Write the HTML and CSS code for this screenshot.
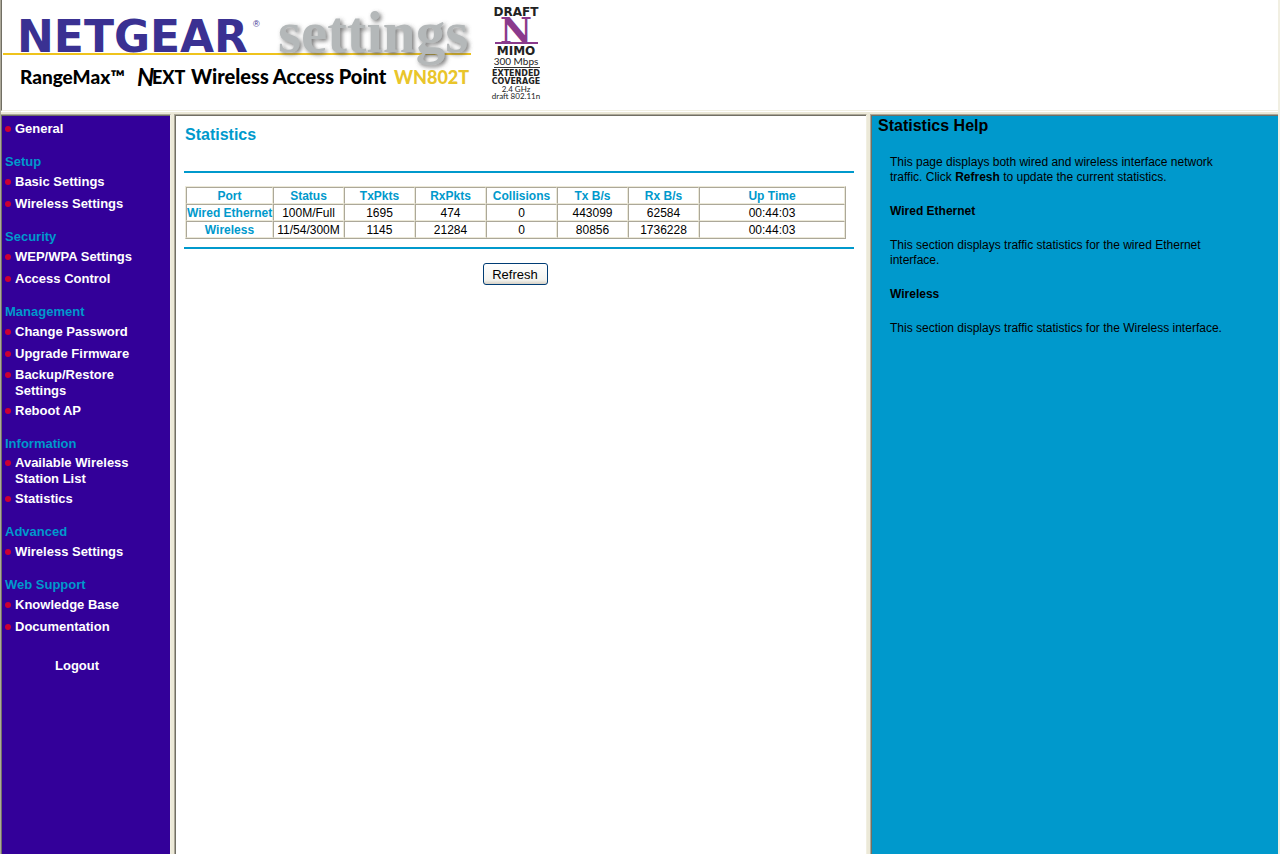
FILE: index.html
```
<!DOCTYPE html>
<html lang="en">
<head>
  <meta charset="UTF-8">
  <meta name="viewport" content="width=device-width, initial-scale=1.0">
  <title>NETGEAR WN802T</title>
  <link rel="stylesheet" href="styles.css">
</head>
<body>

<header class="banner">
  <svg class="logo" width="478" height="100" viewBox="0 0 478 100" role="img" aria-label="NETGEAR settings">
    <defs>
      <filter id="shadow" x="-10%" y="-10%" width="120%" height="130%">
        <feDropShadow dx="2" dy="2" stdDeviation="2" flood-color="#555" flood-opacity="0.8"/>
      </filter>
    </defs>
    <rect x="0" y="53" width="468" height="2" fill="#efc31c"/>
    <text class="brand" x="14" y="52">NETGEAR</text>
    <text class="reg" x="250" y="27">®</text>
    <text class="settings" x="275" y="52" filter="url(#shadow)">settings</text>
    <text class="model" x="17" y="84">RangeMax™</text>
    <text class="model next-n" x="134" y="86">N</text>
    <text class="model next-ext" x="149" y="84">EXT</text>
    <text class="model product" x="188" y="84">Wireless Access Point</text>
    <text class="model number" x="391" y="84">WN802T</text>
  </svg>
  <svg class="badge" width="60" height="104" viewBox="0 0 60 104" role="img" aria-label="Draft N MIMO">
    <text class="badge-bold" x="29" y="16">DRAFT</text>
    <text class="badge-n" x="29" y="43">N</text>
    <rect x="8" y="42" width="43" height="2" fill="#8a3a8c"/>
    <text class="badge-bold" x="29" y="55">MIMO</text>
    <text class="badge-text" x="29" y="65">300 Mbps</text>
    <rect x="7" y="67" width="46" height="1" fill="#333"/>
    <text class="badge-small" x="29" y="76">EXTENDED</text>
    <text class="badge-small" x="29" y="84">COVERAGE</text>
    <text class="badge-light" x="29" y="92">2.4 GHz</text>
    <text class="badge-light" x="29" y="99">draft 802.11n</text>
  </svg>
</header>

<div class="frames">
  <nav class="menu">
    <ul>
      <li><a href="#">General</a></li>
    </ul>
    <h2>Setup</h2>
    <ul>
      <li><a href="#">Basic Settings</a></li>
      <li><a href="#">Wireless Settings</a></li>
    </ul>
    <h2>Security</h2>
    <ul>
      <li><a href="#">WEP/WPA Settings</a></li>
      <li><a href="#">Access Control</a></li>
    </ul>
    <h2>Management</h2>
    <ul>
      <li><a href="#">Change Password</a></li>
      <li><a href="#">Upgrade Firmware</a></li>
      <li class="two-lines"><a href="#">Backup/Restore<br>Settings</a></li>
      <li><a href="#">Reboot AP</a></li>
    </ul>
    <h2>Information</h2>
    <ul>
      <li class="two-lines"><a href="#">Available Wireless<br>Station List</a></li>
      <li><a href="#">Statistics</a></li>
    </ul>
    <h2>Advanced</h2>
    <ul>
      <li><a href="#">Wireless Settings</a></li>
    </ul>
    <h2>Web Support</h2>
    <ul>
      <li><a href="#">Knowledge Base</a></li>
      <li><a href="#">Documentation</a></li>
    </ul>
    <a class="logout" href="#">Logout</a>
  </nav>

  <main class="content">
    <h1>Statistics</h1>
    <div class="stats">
      <table>
        <colgroup>
          <col class="col-port">
          <col span="6" class="col-num">
          <col>
        </colgroup>
        <tr>
          <th>Port</th><th>Status</th><th>TxPkts</th><th>RxPkts</th><th>Collisions</th><th>Tx B/s</th><th>Rx B/s</th><th>Up Time</th>
        </tr>
        <tr>
          <th>Wired Ethernet</th><td>100M/Full</td><td>1695</td><td>474</td><td>0</td><td>443099</td><td>62584</td><td>00:44:03</td>
        </tr>
        <tr>
          <th>Wireless</th><td>11/54/300M</td><td>1145</td><td>21284</td><td>0</td><td>80856</td><td>1736228</td><td>00:44:03</td>
        </tr>
      </table>
    </div>
    <div class="actions">
      <button type="button" class="refresh">Refresh</button>
    </div>
  </main>

  <aside class="help">
    <h2>Statistics Help</h2>
    <div class="help-text">
      <p>This page displays both wired and wireless interface network traffic. Click <b>Refresh</b> to update the current statistics.</p>
      <h3>Wired Ethernet</h3>
      <p>This section displays traffic statistics for the wired Ethernet interface.</p>
      <h3>Wireless</h3>
      <p>This section displays traffic statistics for the Wireless interface.</p>
    </div>
  </aside>
</div>

</body>
</html>
```
FILE: styles.css
```
* {
  box-sizing: border-box;
}

body {
  display: flex;
  flex-direction: column;
  min-height: 100vh;
  margin: 0;
  border-left: 1px solid #aca899;
  border-right: 2px solid #f1efe2;
  background: #fff;
  font-family: "Liberation Sans", Arial, sans-serif;
  color: #000;
}

/* top frame */
.banner {
  display: flex;
  gap: 6px;
  height: 111px;
  border-left: 1px solid #716f64;
  border-bottom: 1px solid #f1efe2;
  padding-left: 1px;
}

.logo,
.badge {
  flex: none;
}

.brand {
  font: bold 44px "DejaVu Sans", sans-serif;
  fill: #3a3192;
}

.reg {
  font: 9px "Liberation Sans", sans-serif;
  fill: #3a3192;
}

.settings {
  font: bold 59px "Liberation Serif", serif;
  fill: #b4b8b9;
}

.model {
  font: 900 19px Lato, sans-serif;
  fill: #000;
}

.next-n {
  font-size: 24px;
  font-weight: 700;
  font-style: italic;
}

.next-ext,
.number {
  font-size: 18px;
}

.product {
  font-size: 20px;
}

.number {
  fill: #e9c52b;
}

.badge text {
  text-anchor: middle;
  fill: #222;
}

.badge .badge-bold {
  font: bold 12px "DejaVu Sans", sans-serif;
}

.badge .badge-n {
  font: bold 35px "DejaVu Serif", serif;
  fill: #8a3a8c;
}

.badge .badge-text {
  font: 10px Lato, sans-serif;
}

.badge .badge-small {
  font: bold 8px "DejaVu Sans", sans-serif;
}

.badge .badge-light {
  font: 8px Lato, sans-serif;
}

/* bottom frames */
.frames {
  display: grid;
  grid-template-columns: 170px minmax(0, 1fr) 408px;
  column-gap: 3px;
  flex: 1;
  margin-top: 1px;
  border-top: 2px solid #ece9d8;
  background: #ece9d8;
}

.menu,
.content,
.help {
  border-top: 1px solid #aca899;
  border-left: 1px solid #aca899;
  box-shadow: inset 1px 1px #716f64;
}

.menu,
.content {
  border-right: 1px solid #f1efe2;
}

.menu {
  padding: 3px 0 20px 4px;
  border-left: none;
  background: #330099;
  font-size: 13px;
  font-weight: bold;
}

.menu h2 {
  margin: 12px 0 0;
  font-size: 13px;
  line-height: 19px;
  color: #0099cc;
}

.menu ul {
  margin: 0;
  padding: 0;
  list-style: none;
}

.menu li {
  display: flex;
  gap: 4px;
  padding: 3px 0;
  line-height: 16px;
}

.menu .two-lines {
  padding: 2px 0 1px;
}

.menu li::before {
  content: "";
  width: 6px;
  height: 6px;
  margin-top: 5px;
  border-radius: 50%;
  background: #cc0033;
}

.menu a {
  color: #fff;
  text-decoration: none;
}

.menu .logout {
  display: block;
  margin: 20px 0 0 50px;
}

.content {
  padding: 10px 12px 20px 9px;
  background: #fff;
}

.content h1 {
  margin: 0 1px;
  font-size: 16px;
  line-height: 20px;
  color: #0099cc;
}

.stats {
  margin-top: 26px;
  padding: 13px 8px 8px 1px;
  border-top: 2px solid #0099cc;
  border-bottom: 2px solid #0099cc;
}

table {
  width: 100%;
  border: 1px solid;
  border-color: #ece9d8 #aca899 #aca899 #ece9d8;
  border-spacing: 0;
  table-layout: fixed;
  font-size: 12px;
}

.col-port {
  width: 87px;
}

.col-num {
  width: 71px;
}

th,
td {
  height: 17px;
  padding: 1px 0 0;
  border: 1px solid;
  border-color: #aca899 #ece9d8 #ece9d8 #aca899;
  line-height: 14px;
  text-align: center;
  white-space: nowrap;
}

th {
  color: #0099cc;
}

.actions {
  padding: 14px 8px 0 0;
  text-align: center;
}

.refresh {
  width: 65px;
  height: 22px;
  padding: 0;
  border: 1px solid #003c74;
  border-radius: 3px;
  background: linear-gradient(#fff, #f3f3ef 80%, #d6d0c5);
  font: 13px "Liberation Sans", Arial, sans-serif;
  color: #000;
}

.help {
  padding: 2px 44px 20px 7px;
  background: #0099cc;
}

.help h2 {
  margin: 0;
  font-size: 16px;
  line-height: 18px;
}

.help-text {
  padding: 20px 0 0 12px;
  font-size: 12px;
  line-height: 15px;
}

.help-text p,
.help-text h3 {
  margin: 0 0 19px;
}

.help-text h3 {
  font-size: 12px;
}
```
